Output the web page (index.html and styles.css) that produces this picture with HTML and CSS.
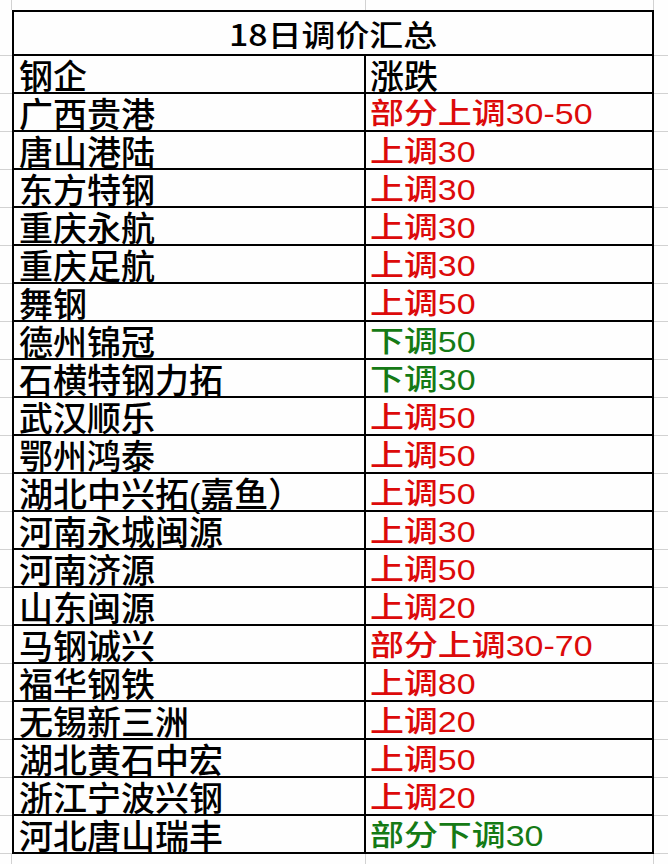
FILE: index.html
```html
<!DOCTYPE html>
<html lang="zh-CN">
<head>
<meta charset="utf-8">
<title>18日调价汇总</title>
<link rel="stylesheet" href="styles.css">
</head>
<body>
<div class="sheet">
  <div class="gt g1"></div><div class="gt g2"></div><div class="gt g3"></div><div class="gt g4"></div>

  <div class="gl"></div><div class="title"><span class="tt">18日调价汇总</span></div><div class="gr"></div>
  <div class="gl"></div><div class="c1">钢企</div><div class="c2">涨跌</div><div class="gr"></div>

  <div class="gl"></div><div class="c1">广西贵港</div><div class="c2 up"><span class="v">部分上调30-50</span></div><div class="gr"></div>
  <div class="gl"></div><div class="c1">唐山港陆</div><div class="c2 up"><span class="v">上调30</span></div><div class="gr"></div>
  <div class="gl"></div><div class="c1">东方特钢</div><div class="c2 up"><span class="v">上调30</span></div><div class="gr"></div>
  <div class="gl"></div><div class="c1">重庆永航</div><div class="c2 up"><span class="v">上调30</span></div><div class="gr"></div>
  <div class="gl"></div><div class="c1">重庆足航</div><div class="c2 up"><span class="v">上调30</span></div><div class="gr"></div>
  <div class="gl"></div><div class="c1">舞钢</div><div class="c2 up"><span class="v">上调50</span></div><div class="gr"></div>
  <div class="gl"></div><div class="c1">德州锦冠</div><div class="c2 down"><span class="v">下调50</span></div><div class="gr"></div>
  <div class="gl"></div><div class="c1">石横特钢力拓</div><div class="c2 down"><span class="v">下调30</span></div><div class="gr"></div>
  <div class="gl"></div><div class="c1">武汉顺乐</div><div class="c2 up"><span class="v">上调50</span></div><div class="gr"></div>
  <div class="gl"></div><div class="c1">鄂州鸿泰</div><div class="c2 up"><span class="v">上调50</span></div><div class="gr"></div>
  <div class="gl"></div><div class="c1">湖北中兴拓(嘉鱼）</div><div class="c2 up"><span class="v">上调50</span></div><div class="gr"></div>
  <div class="gl"></div><div class="c1">河南永城闽源</div><div class="c2 up"><span class="v">上调30</span></div><div class="gr"></div>
  <div class="gl"></div><div class="c1">河南济源</div><div class="c2 up"><span class="v">上调50</span></div><div class="gr"></div>
  <div class="gl"></div><div class="c1">山东闽源</div><div class="c2 up"><span class="v">上调20</span></div><div class="gr"></div>
  <div class="gl"></div><div class="c1">马钢诚兴</div><div class="c2 up"><span class="v">部分上调30-70</span></div><div class="gr"></div>
  <div class="gl"></div><div class="c1">福华钢铁</div><div class="c2 up"><span class="v">上调80</span></div><div class="gr"></div>
  <div class="gl"></div><div class="c1">无锡新三洲</div><div class="c2 up"><span class="v">上调20</span></div><div class="gr"></div>
  <div class="gl"></div><div class="c1">湖北黄石中宏</div><div class="c2 up"><span class="v">上调50</span></div><div class="gr"></div>
  <div class="gl"></div><div class="c1">浙江宁波兴钢</div><div class="c2 up"><span class="v">上调20</span></div><div class="gr"></div>
  <div class="gl"></div><div class="c1">河北唐山瑞丰</div><div class="c2 down"><span class="v">部分下调30</span></div><div class="gr"></div>

  <div class="gb g1"></div><div class="gb g2"></div><div class="gb g3"></div><div class="gb g4"></div>
</div>
</body>
</html>
```
FILE: styles.css
```css
html, body {
  margin: 0;
  padding: 0;
  background: #fefefe;
}
.sheet {
  width: 668px;
  height: 864px;
  overflow: hidden;
  display: grid;
  grid-template-columns: 12px 354px 288px 14px;
  grid-template-rows: 10px 46px 38px repeat(20, 38px) 1fr;
  font-family: "Noto Sans CJK SC", sans-serif;
  font-weight: 500;
  color: #000;
}
.sheet > div {
  box-sizing: border-box;
  min-width: 0;
  white-space: nowrap;
}
.gt, .gb {
  border-right: 1px solid #d2d2d2;
}
.g4 { border-right: none; }
.gl, .gr {
  border-bottom: 1px solid #d2d2d2;
}
.title {
  grid-column: 2 / 4;
  border: 2px solid #000;
  text-align: center;
  font-size: 30px;
  line-height: 42px;
}
.tt {
  display: inline-block;
  transform: scaleX(1.13);
  transform-origin: center;
}
.c1, .c2 {
  font-family: "Liberation Sans", "Noto Sans CJK SC", sans-serif;
  border-right: 2px solid #000;
  border-bottom: 2px solid #000;
  font-size: 34px;
  line-height: 36px;
  padding-top: 3px;
}
.c1 {
  border-left: 2px solid #000;
  padding-left: 5px;
}
.c2 {
  padding-left: 4px;
}
.up, .down {
  font-size: 29px;
  line-height: 36px;
  padding-top: 2px;
}
.up { color: #dc0a0a; }
.down { color: #157a15; }
.v {
  display: inline-block;
  transform: scaleX(1.17);
  transform-origin: left center;
}
```
